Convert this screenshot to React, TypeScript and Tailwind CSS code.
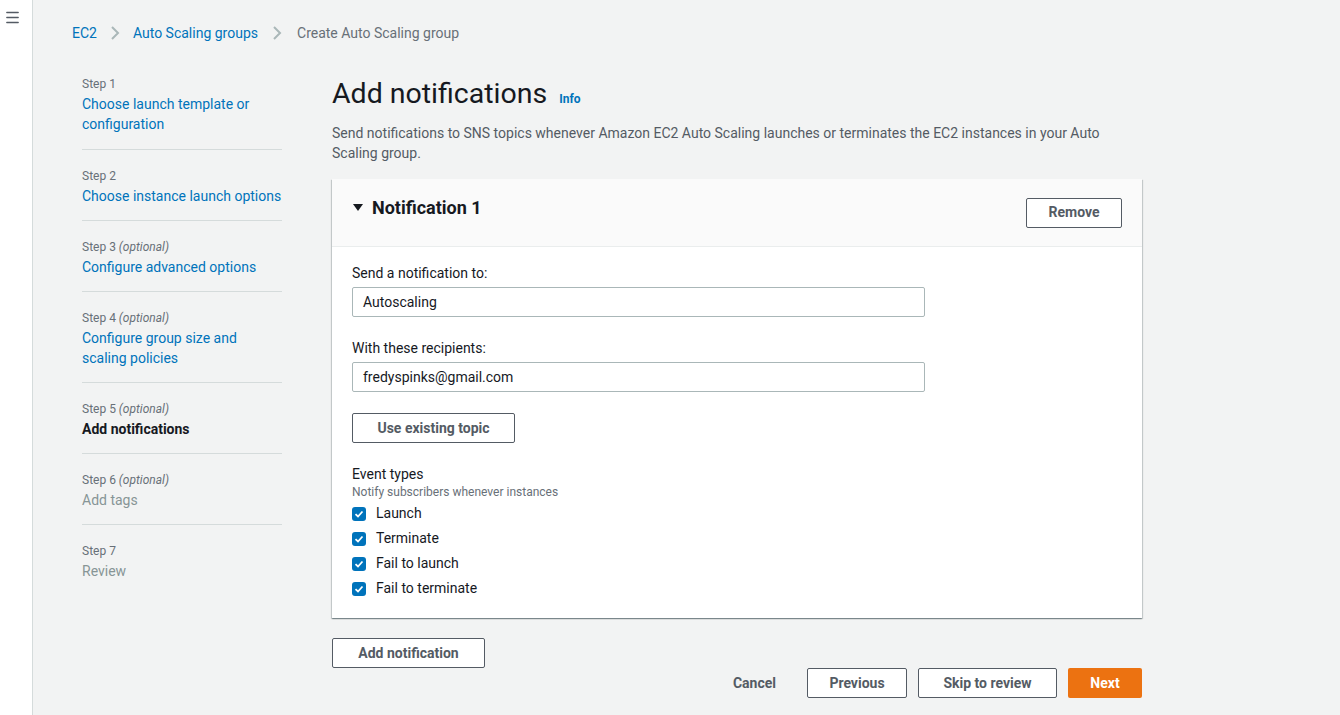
import { Menu } from "lucide-react";

const steps = [
  { step: "Step 1", optional: false, title: "Choose launch template or configuration", state: "link" },
  { step: "Step 2", optional: false, title: "Choose instance launch options", state: "link" },
  { step: "Step 3", optional: true, title: "Configure advanced options", state: "link" },
  { step: "Step 4", optional: true, title: "Configure group size and scaling policies", state: "link" },
  { step: "Step 5", optional: true, title: "Add notifications", state: "active" },
  { step: "Step 6", optional: true, title: "Add tags", state: "disabled" },
  { step: "Step 7", optional: false, title: "Review", state: "disabled" },
];

const events = ["Launch", "Terminate", "Fail to launch", "Fail to terminate"];

function Chevron({ className = "mx-[13px]" }: { className?: string }) {
  return (
    <svg width="10" height="16" viewBox="0 0 10 16" className={className}>
      <path d="M2 2 L8 8 L2 14" fill="none" stroke="#aab7b8" strokeWidth="2" />
    </svg>
  );
}

function CheckBox() {
  return (
    <span className="w-[14px] h-[14px] rounded-[3px] bg-[#0073bb] flex items-center justify-center">
      <svg width="10" height="10" viewBox="0 0 10 10">
        <path d="M1.5 5.2 L4 7.5 L8.5 2.5" fill="none" stroke="white" strokeWidth="1.8" />
      </svg>
    </span>
  );
}

function OutlineButton({ label, className = "" }: { label: string; className?: string }) {
  return (
    <button className={`h-[30px] border border-[#545b64] rounded-[2px] bg-white text-[14px] font-bold text-[#545b64] ${className}`}>
      {label}
    </button>
  );
}

export default function App() {
  return (
    <div className="flex min-h-[715px] bg-[#f2f3f3] text-[#16191f] font-['Roboto','Liberation_Sans',sans-serif]">
      <div className="w-[33px] shrink-0 bg-white border-r border-[#d5dbdb] pt-[9px] pl-[4px]">
        <Menu size={17} strokeWidth={2} className="text-[#545b64]" />
      </div>

      <div className="flex-1 pl-[39px]">
        <div className="flex items-center h-[20px] mt-[23px] text-[14px]">
          <span className="text-[#0073bb]">EC2</span>
          <Chevron />
          <span className="text-[#0073bb]">Auto Scaling groups</span>
          <Chevron className="ml-[14px] mr-[15px]" />
          <span className="text-[#687078]">Create Auto Scaling group</span>
        </div>

        <div className="flex mt-[21px]">
          <nav className="w-[200px] ml-[10px] mr-[50px] mt-[12px] shrink-0">
            {steps.map((s, i) => (
              <div
                key={s.step}
                className={`pb-[14px] ${i < steps.length - 1 ? "border-b border-[#d5dbdb]" : ""} ${i === 0 ? "pt-0 pb-[15px]" : "pt-[18px]"}`}
              >
                <div className="text-[12px] leading-[16px] text-[#687078]">
                  {s.step} {s.optional && <i>(optional)</i>}
                </div>
                <div
                  className={`text-[14px] leading-[20px] mt-[2px] ${
                    s.state === "link" ? "text-[#0073bb]" : s.state === "active" ? "font-bold text-[#16191f]" : "text-[#879596]"
                  }`}
                >
                  {s.title}
                </div>
              </div>
            ))}
          </nav>

          <main className="w-[810px]">
            <div className="flex items-baseline mt-[12px]">
              <h1 className="text-[28.5px] leading-[36px] text-[#16191f]">Add notifications</h1>
              <span className="ml-[12px] text-[12px] font-bold text-[#0073bb]">Info</span>
            </div>
            <p className="mt-[11px] text-[14px] leading-[20px] text-[#545b64] pr-[20px]">
              Send notifications to SNS topics whenever Amazon EC2 Auto Scaling launches or terminates the EC2 instances in your Auto Scaling group.
            </p>

            <section className="mt-[16px] bg-white shadow-[0_1px_1px_0_rgba(0,28,36,0.3),1px_1px_1px_0_rgba(0,28,36,0.15),-1px_1px_1px_0_rgba(0,28,36,0.15)]">
              <div className="h-[68px] bg-[#fafafa] border-b border-[#eaeded] flex items-center justify-between pl-[20px] pr-[20px]">
                <div className="flex items-center gap-[8px] -mt-[10px]">
                  <svg width="12" height="10" viewBox="0 0 12 10">
                    <path d="M1 1 L11 1 L6 8 Z" fill="#16191f" />
                  </svg>
                  <span className="text-[18px] font-bold">Notification 1</span>
                </div>
                <OutlineButton label="Remove" className="w-[96px]" />
              </div>

              <div className="px-[20px] pt-[16px] pb-[17px]">
                <label className="block text-[14px] leading-[20px]">Send a notification to:</label>
                <div className="mt-[4px] w-[573px] h-[30px] border border-[#aab7b8] rounded-[2px] px-[10px] flex items-center text-[14px]">
                  Autoscaling
                </div>

                <label className="block mt-[21px] text-[14px] leading-[20px]">With these recipients:</label>
                <div className="mt-[4px] w-[573px] h-[30px] border border-[#aab7b8] rounded-[2px] px-[10px] flex items-center text-[14px]">
                  fredyspinks@gmail.com
                </div>

                <OutlineButton label="Use existing topic" className="mt-[21px] w-[163px]" />

                <div className="mt-[21px] text-[14px] leading-[20px]">Event types</div>
                <div className="text-[12px] leading-[16px] text-[#687078]">Notify subscribers whenever instances</div>
                <div className="mt-[1px]">
                  {events.map((e) => (
                    <div key={e} className="flex items-center h-[25px] gap-[10px]">
                      <CheckBox />
                      <span className="text-[14px]">{e}</span>
                    </div>
                  ))}
                </div>
              </div>
            </section>

            <OutlineButton label="Add notification" className="mt-[20px] w-[153px]" />

            <div className="flex justify-end items-center gap-[11px]">
              <button className="text-[14px] font-bold text-[#545b64] px-[20px]">Cancel</button>
              <OutlineButton label="Previous" className="w-[100px]" />
              <OutlineButton label="Skip to review" className="w-[139px]" />
              <button className="h-[30px] w-[74px] bg-[#ec7211] rounded-[2px] text-white text-[14px] font-bold">Next</button>
            </div>
          </main>
        </div>
      </div>
    </div>
  );
}
